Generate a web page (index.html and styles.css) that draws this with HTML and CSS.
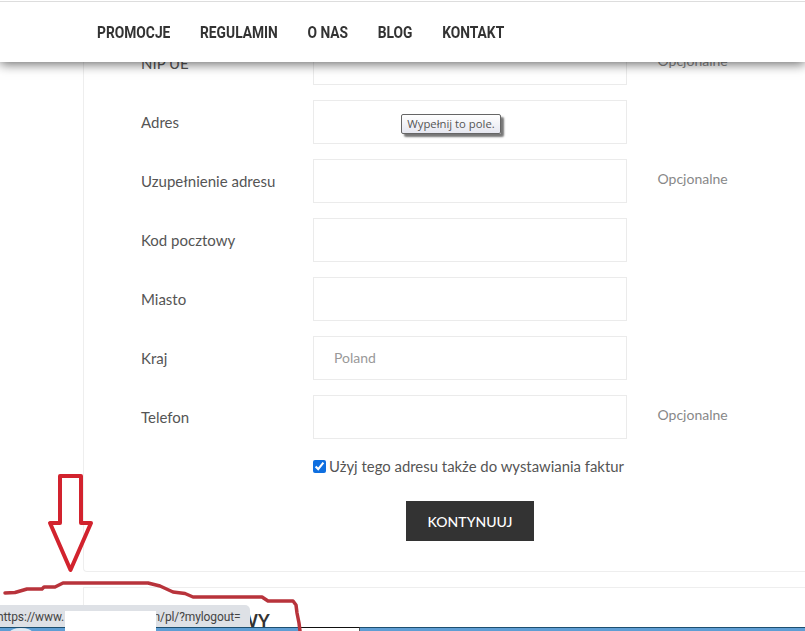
FILE: index.html
```html
<!DOCTYPE html>
<html lang="pl">
<head>
<meta charset="utf-8">
<title>Adres</title>
<link rel="stylesheet" href="styles.css">
</head>
<body>
<header class="topbar">
  <nav class="nav">
    <a href="#">PROMOCJE</a>
    <a href="#">REGULAMIN</a>
    <a href="#">O NAS</a>
    <a href="#">BLOG</a>
    <a href="#">KONTAKT</a>
  </nav>
</header>
<main class="page">
  <form class="card">
    <div class="row"><label>NIP UE</label><input type="text"><span class="opt">Opcjonalne</span></div>
    <div class="row"><label>Adres</label><input type="text"></div>
    <div class="row"><label>Uzupełnienie adresu</label><input type="text"><span class="opt">Opcjonalne</span></div>
    <div class="row"><label>Kod pocztowy</label><input type="text"></div>
    <div class="row"><label>Miasto</label><input type="text"></div>
    <div class="row"><label>Kraj</label><input type="text" placeholder="Poland"></div>
    <div class="row"><label>Telefon</label><input type="text"><span class="opt">Opcjonalne</span></div>
    <div class="check"><input type="checkbox" checked><span>Użyj tego adresu także do wystawiania faktur</span></div>
    <div class="actions"><button type="button">KONTYNUUJ</button></div>
  </form>
  <section class="card2"><h2>WY</h2></section>
</main>
<div class="tooltip">Wypełnij to pole.</div>
<div class="taskbar">
  <span class="orb"></span>
  <span class="tab"></span>
</div>
<div class="status"><span class="url-start">https://www.</span><span>n/pl/?mylogout=</span></div>
<div class="redact"></div>
<svg class="marks" width="805" height="631" viewBox="0 0 805 631" fill="none">
  <path class="arrow" d="M60 476H81V523H91L70.500 570L50 523H60Z"/>
  <path class="scribble" d="M5 593L15 592.500L27 589L42 589L44 587L55 587L63 583L148 583L160 586L173 592L185 593.500L193 597L262 597L268 601L293 601L296 605L297 613L299 623L300 631"/>
</svg>
</body>
</html>
```
FILE: styles.css
```css
* { box-sizing: border-box; }
html, body { margin: 0; height: 631px; overflow: hidden; background: #fff; }
body { font-family: Lato, "Open Sans", sans-serif; color: #555; font-size: 15px; }

.topbar {
  position: fixed; top: 0; left: 0; right: 0; height: 62px; z-index: 5;
  background: #fff;
  border-top: 1px solid #fff;
  box-shadow: inset 0 1px 0 #ddd, 0 2px 11px rgba(0, 0, 0, .6);
  padding-left: 97px;
}
.nav {
  display: flex; gap: 36.500px; height: 61px; align-items: center;
  transform: scaleX(.812); transform-origin: left center;
}
.nav a {
  font-family: Roboto, sans-serif; font-weight: 700; font-size: 17px;
  color: #333; text-decoration: none;
}

.page { padding: 41px 0 0 83px; }
.card {
  height: 531px; margin-right: -20px;
  border-left: 1px solid #eee; border-bottom: 1px solid #eee;
  border-bottom-left-radius: 4px;
  padding-left: 57px;
}
.row { display: flex; align-items: center; height: 44px; margin-bottom: 15px; }
.row label { width: 172px; flex: none; }
.row input {
  width: 314px; height: 44px; flex: none;
  border: 1px solid #ebebeb; background: #fff; padding: 0 20px 2px;
  font: 14px Lato, sans-serif; color: #555;
}
.row input::placeholder { color: #999; opacity: 1; }
.opt { margin-left: 30.500px; color: #888; font-size: 14px; position: relative; top: -3px; }

.check { display: flex; align-items: center; margin: 5px 0 0 172px; height: 24px; }
.check input { margin: 0 3px 0 0; width: 13px; height: 13px; flex: none; accent-color: #0f6fe0; }
.check span { font-size: 14.900px; color: #555; white-space: nowrap; }

.actions { margin: 23px 0 0 265px; }
.actions button {
  width: 128px; height: 40px; border: 0; border-radius: 0;
  background: #333; color: #fff;
  font: 500 14px Lato, sans-serif;
}

.card2 {
  margin-top: 15px; height: 60px;
  border-left: 1px solid #eee; border-top: 1px solid #eee;
  padding: 23px 0 0 155px;
}
.card2 h2 { margin: 0; font-size: 18px; line-height: 20px; font-weight: 700; color: #333; }

.tooltip {
  position: absolute; left: 401px; top: 114px; width: 100px; height: 20px; z-index: 3;
  border: 1px solid #666; border-radius: 2px;
  background: linear-gradient(#fff, #e6e7f0);
  box-shadow: 3px 3px 2px #777;
  font: 11.300px/18px "Open Sans", sans-serif; color: #555; text-align: center;
  white-space: nowrap;
}

.taskbar {
  position: absolute; left: 0; right: 0; top: 627px; height: 4px; z-index: 6;
  background: #5f9ed4; border-top: 1px solid #1d4f70;
}
.orb {
  position: absolute; left: 10px; top: 0; width: 22px; height: 8px;
  border-radius: 50%; background: #dfe9f2;
}
.tab {
  position: absolute; left: 300px; top: -1px; width: 60px; height: 4px;
  background: #fff; border-top: 1px solid #111; border-right: 1px solid #555;
}

.status {
  position: absolute; left: 0; top: 605px; width: 250px; height: 22px; z-index: 7;
  background: #dee1e6; border-top-right-radius: 5px;
  font: 12px/25px Roboto, sans-serif; letter-spacing: -.1px; color: #444;
  display: flex; white-space: nowrap; overflow: hidden;
}
.url-start { flex: 0 0 156.500px; margin-left: -3px; }
.redact {
  position: absolute; left: 65px; top: 611px; width: 91px; height: 20px; z-index: 8;
  background: #fff;
}
.marks { position: absolute; left: 0; top: 0; z-index: 9; }
.arrow { stroke: #d2232e; stroke-width: 4; stroke-linejoin: round; }
.scribble { stroke: #b8333b; stroke-width: 3.500; stroke-linejoin: round; stroke-linecap: round; }
```
